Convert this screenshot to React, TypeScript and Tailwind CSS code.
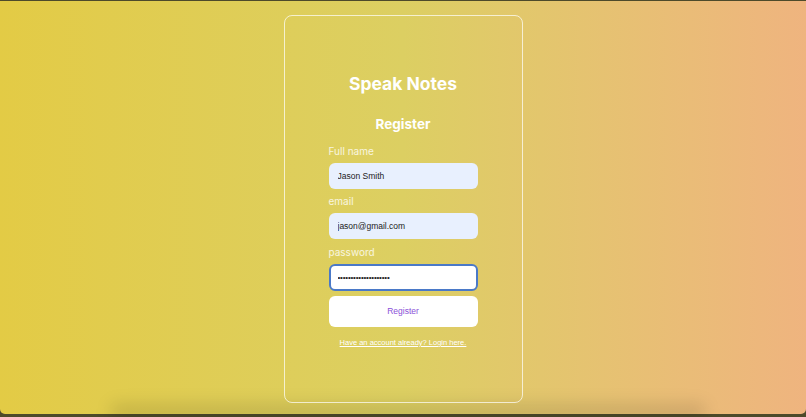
export default function App() {
  return (
    <div className="h-[417px] w-[806px] overflow-hidden bg-[#4d4a2a] pt-px">
      <div className="relative flex h-[413px] w-full justify-center rounded-b-[5px] bg-gradient-to-r from-[#e3cb45] via-[#dccf62] to-[#efb47f] pt-[14px] font-['Inter',sans-serif]">
        {/* bottom shadow of the window */}
        <div className="pointer-events-none absolute bottom-[-6px] left-[110px] right-[100px] h-[16px] rounded-full bg-black/12 blur-[8px]" />
        <div className="relative flex h-[388px] w-[239px] flex-col items-center rounded-[8px] border border-white/70 pt-[56px]">
          <h1 className="text-[17.5px] font-bold leading-[24px] text-white">Speak Notes</h1>
          <h2 className="mt-[19px] text-[13.5px] font-bold leading-[18px] text-white">Register</h2>
          <form className="mt-[8px] flex w-[149px] flex-col">
            <Field label="Full name" value="Jason Smith" />
            <Field label="email" value="jason@gmail.com" />
            <label className="mt-[4px] text-[10px] leading-[14px] text-white/80">password</label>
            <input
              readOnly
              type="password"
              value="••••••••••••••••••••"
              className="mt-[5px] h-[27px] rounded-[6px] border-2 border-[#4a79c8] bg-white px-[7px] font-['Liberation_Sans',sans-serif] text-[8px] tracking-[-0.2px] text-[#222] outline-none"
            />
            <button
              type="button"
              className="mt-[5px] h-[31px] rounded-[6px] bg-white font-['Liberation_Sans',sans-serif] text-[8.5px] text-[#8a4fd8]"
            >
              Register
            </button>
          </form>
          <a className="mt-[10px] font-['Liberation_Sans',sans-serif] text-[7.5px] text-white underline">
            Have an account already? Login here.
          </a>
        </div>
      </div>
    </div>
  );
}

function Field({ label, value }: { label: string; value: string }) {
  return (
    <>
      <label className="mt-[3px] text-[10px] leading-[14px] text-white/80">{label}</label>
      <input
        readOnly
        value={value}
        className="mb-[2px] mt-[5px] h-[26px] rounded-[6px] bg-[#e8f0fe] px-[9px] font-['Liberation_Sans',sans-serif] text-[8.5px] text-[#222] outline-none"
      />
    </>
  );
}
